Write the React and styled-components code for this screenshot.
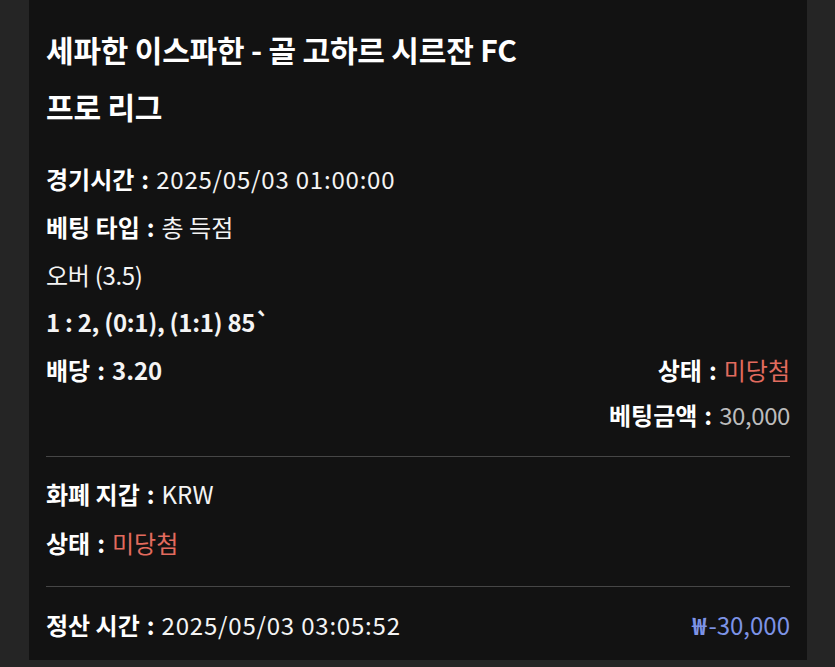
import React from "react";
import styled, { createGlobalStyle } from "styled-components";

const GlobalStyle = createGlobalStyle`
  html, body {
    margin: 0;
    padding: 0;
    background: #252525;
  }
  body {
    font-family: "Noto Sans CJK KR", "Noto Sans", sans-serif;
    color: #f4f4f4;
  }
  * { box-sizing: border-box; }
`;

const Page = styled.div`
  padding: 0 28px 5px 29px;
`;

const Card = styled.div`
  background: #121212;
  padding: 21px 17px 11px 17px;
`;

const TitleLine = styled.div`
  font-size: 30px;
  font-weight: 700;
  line-height: 57px;
  color: #ffffff;
  white-space: nowrap;
  letter-spacing: -0.2px;
`;

const Section = styled.div`
  padding: ${(p) => p.$pad || "0"};
  border-top: ${(p) => (p.$divider ? "1px solid #464646" : "none")};
`;

const Row = styled.div`
  display: flex;
  justify-content: ${(p) => (p.$right ? "flex-end" : "space-between")};
  align-items: center;
  font-size: 24px;
  line-height: ${(p) => p.$lh || "48px"};
  white-space: nowrap;
`;

const Item = styled.span`
  display: inline-flex;
  align-items: baseline;
`;

const Label = styled.span`
  font-weight: 700;
  color: #ffffff;
`;

const Colon = styled.span`
  font-weight: 700;
  color: #ffffff;
  margin: 0 7px;
`;

const Value = styled.span`
  font-weight: ${(p) => (p.$bold ? 700 : 400)};
  letter-spacing: ${(p) => p.$ls || "0"};
  color: ${(p) =>
    p.$tone === "red"
      ? "#e26b5e"
      : p.$tone === "gray"
      ? "#bcbcbc"
      : p.$tone === "blue"
      ? "#7d93e6"
      : "#f4f4f4"};
`;

const Won = styled.span`
  font-weight: 700;
  margin-right: 2px;
`;

const Field = ({ label, children }) => (
  <Item>
    <Label>{label}</Label>
    <Colon>:</Colon>
    {children}
  </Item>
);

export default function App() {
  return (
    <>
      <GlobalStyle />
      <Page>
        <Card>
          <TitleLine>세파한 이스파한 - 골 고하르 시르잔 FC</TitleLine>
          <TitleLine>프로 리그</TitleLine>

          <Section $pad="20px 0 20px 0">
            <Row>
              <Field label="경기시간">
                <Value $ls="0.8px">2025/05/03 01:00:00</Value>
              </Field>
            </Row>
            <Row>
              <Field label="베팅 타입">
                <Value>총 득점</Value>
              </Field>
            </Row>
            <Row $lh="47px">
              <Value $ls="-0.3px">오버 (3.5)</Value>
            </Row>
            <Row $lh="48px">
              <Value $bold $ls="-0.3px">1 : 2, (0:1), (1:1) 85`</Value>
            </Row>
            <Row $lh="48px">
              <Field label="배당">
                <Value $bold>3.20</Value>
              </Field>
              <Field label="상태">
                <Value $tone="red">미당첨</Value>
              </Field>
            </Row>
            <Row $right $lh="42px">
              <Field label="베팅금액">
                <Value $tone="gray" $ls="-0.4px">30,000</Value>
              </Field>
            </Row>
          </Section>

          <Section $divider $pad="13px 0 19px 0">
            <Row>
              <Field label="화폐 지갑">
                <Value>KRW</Value>
              </Field>
            </Row>
            <Row $lh="49px">
              <Field label="상태">
                <Value $tone="red">미당첨</Value>
              </Field>
            </Row>
          </Section>

          <Section $divider $pad="14px 0 0 0">
            <Row>
              <Field label="정산 시간">
                <Value $ls="0.8px">2025/05/03 03:05:52</Value>
              </Field>
              <Value $tone="blue">
                <Won>₩</Won>-30,000
              </Value>
            </Row>
          </Section>
        </Card>
      </Page>
    </>
  );
}
